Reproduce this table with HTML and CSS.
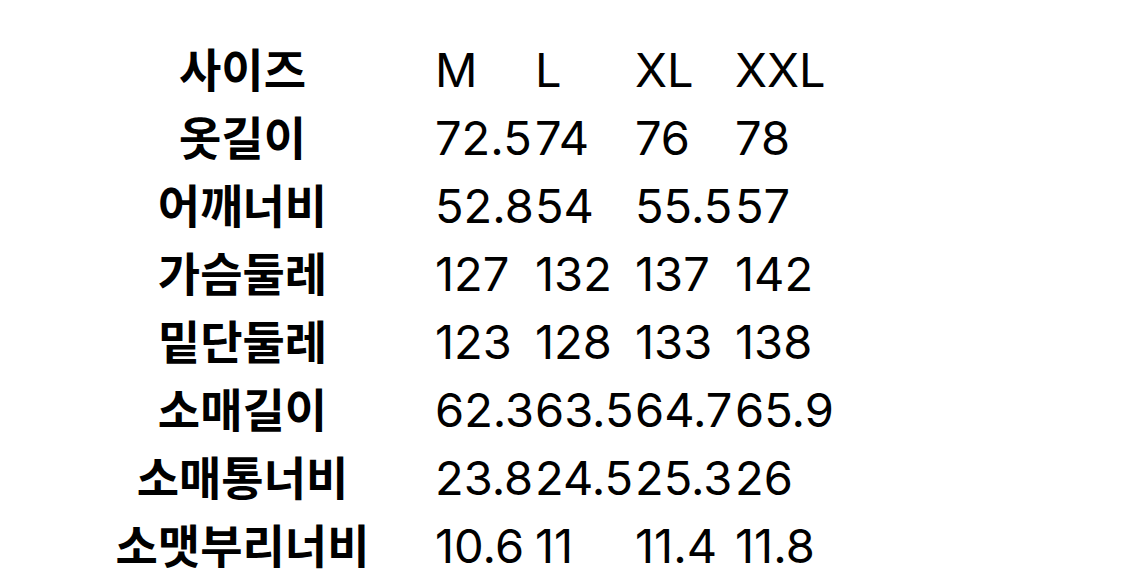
FILE: index.html
```html
<!DOCTYPE html>
<html lang="ko">
<head>
<meta charset="utf-8">
<link rel="stylesheet" href="styles.css">
</head>
<body>
<div class="table">
  <div class="row"><div class="label">사이즈</div><span class="v">M</span><span class="v">L</span><span class="v">XL</span><span class="v">XXL</span></div>
  <div class="row"><div class="label">옷길이</div><span class="v">72.5</span><span class="v">74</span><span class="v">76</span><span class="v">78</span></div>
  <div class="row"><div class="label">어깨너비</div><span class="v">52.8</span><span class="v">54</span><span class="v">55.5</span><span class="v">57</span></div>
  <div class="row"><div class="label">가슴둘레</div><span class="v">127</span><span class="v">132</span><span class="v">137</span><span class="v">142</span></div>
  <div class="row"><div class="label">밑단둘레</div><span class="v">123</span><span class="v">128</span><span class="v">133</span><span class="v">138</span></div>
  <div class="row"><div class="label">소매길이</div><span class="v">62.3</span><span class="v">63.5</span><span class="v">64.7</span><span class="v">65.9</span></div>
  <div class="row"><div class="label">소매통너비</div><span class="v">23.8</span><span class="v">24.5</span><span class="v">25.3</span><span class="v">26</span></div>
  <div class="row"><div class="label">소맷부리너비</div><span class="v">10.6</span><span class="v">11</span><span class="v">11.4</span><span class="v">11.8</span></div>
</div>
</body>
</html>
```
FILE: styles.css
```css
html, body {
  margin: 0;
  background: #ffffff;
  color: #000000;
}
.table {
  padding: 41px 0 0 50px;
}
.row {
  display: flex;
  align-items: baseline;
  height: 68px;
  white-space: nowrap;
}
.label {
  width: 385px;
  flex-shrink: 0;
  text-align: center;
  font-family: "Noto Sans CJK KR", sans-serif;
  font-weight: 700;
  font-size: 46px;
  line-height: 1.12;
}
.v {
  min-width: 100px;
  flex-shrink: 0;
  font-family: Inter, "Liberation Sans", sans-serif;
  font-size: 47px;
  font-weight: 400;
  line-height: normal;
}
```
